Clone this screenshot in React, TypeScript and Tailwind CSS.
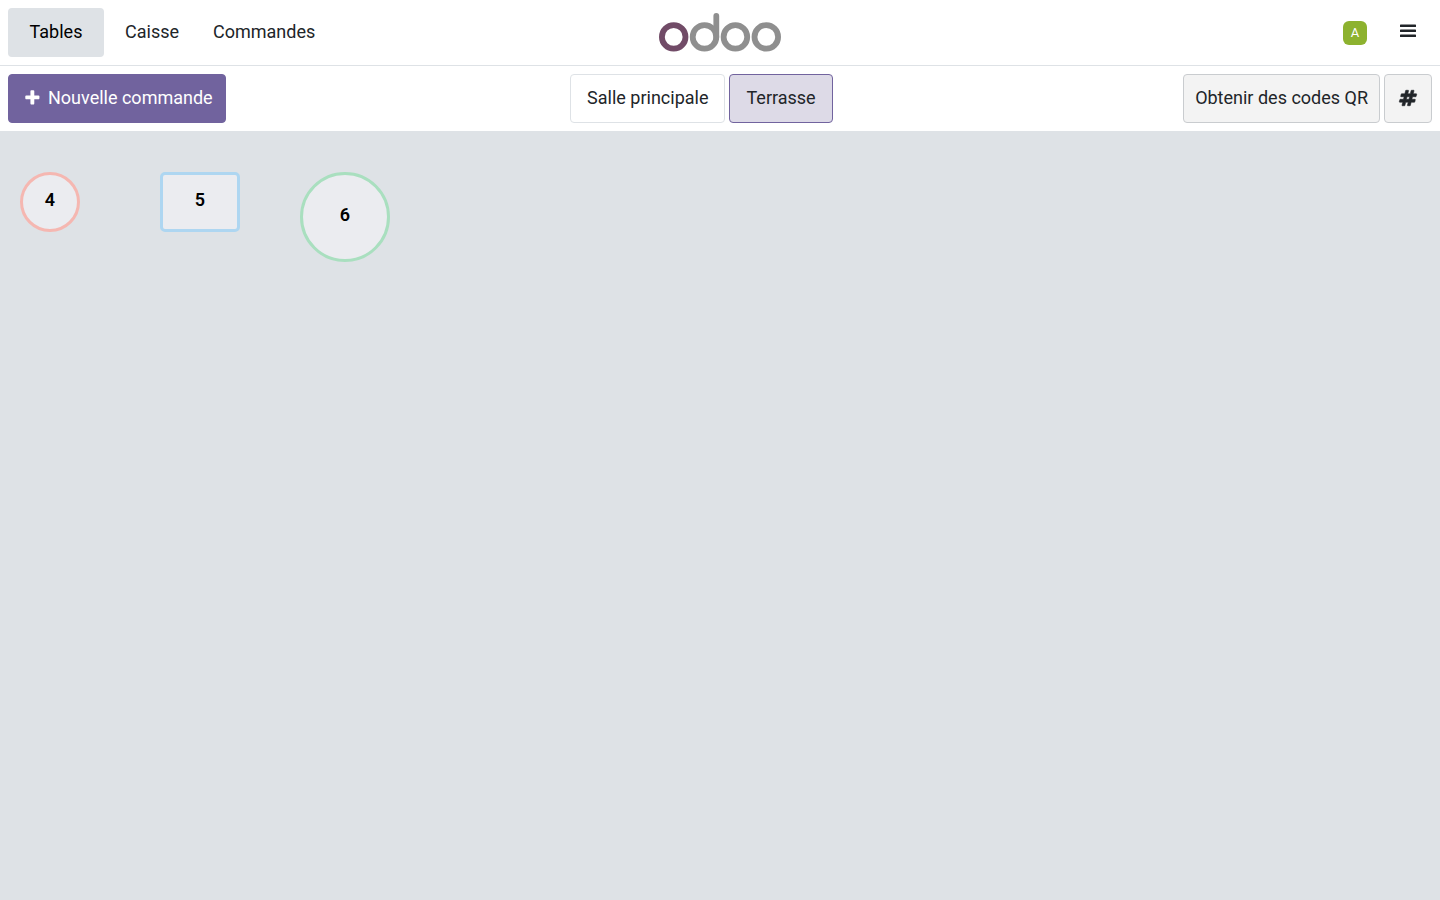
import { useState } from "react";
import clsx from "clsx";

const ICONS = {
  plus: {
    viewBox: "64 0 1792 1792",
    stroke: 0,
    path: "M1600 736v192q0 40-28 68t-68 28h-416v416q0 40-28 68t-68 28h-192q-40 0-68-28t-28-68v-416h-416q-40 0-68-28t-28-68v-192q0-40 28-68t68-28h416v-416q0-40 28-68t68-28h192q40 0 68 28t28 68v416h416q40 0 68 28t28 68z",
  },
  hashtag: {
    viewBox: "0 0 1792 1792",
    stroke: 60,
    path: "M991 1024l64-256h-254l-64 256h254zm768-504l-56 224q-7 24-31 24h-327l-64 256h311q15 0 25 12 10 14 6 28l-56 224q-5 24-31 24h-327l-81 328q-7 24-31 24h-224q-16 0-26-12-9-12-6-28l78-312h-254l-81 328q-7 24-31 24h-225q-15 0-25-12-9-12-6-28l78-312h-311q-15 0-25-12-9-12-6-28l56-224q7-24 31-24h327l64-256h-311q-15 0-25-12-10-14-6-28l56-224q5-24 31-24h327l81-328q7-24 32-24h224q15 0 25 12 9 12 6 28l-78 312h254l81-328q7-24 32-24h224q15 0 25 12 9 12 6 28l-78 312h311q15 0 25 12 9 12 6 28z",
  },
};

function Icon({ name }: { name: keyof typeof ICONS }) {
  const { viewBox, path, stroke } = ICONS[name];
  return (
    <svg viewBox={viewBox} className="size-[18px] shrink-0 overflow-visible" fill="currentColor" aria-hidden="true">
      <path d={path} stroke="currentColor" strokeWidth={stroke} />
    </svg>
  );
}

function Logo() {
  return (
    <svg viewBox="0 1 122 40" className="h-10 w-[122px]" fill="none" strokeWidth="5.8" role="img" aria-label="Odoo">
      <circle cx="14.7" cy="24.9" r="11.8" stroke="#714B67" />
      <g stroke="#8F8F8F">
        <circle cx="45.5" cy="24.9" r="11.8" />
        <circle cx="76.4" cy="24.9" r="11.8" />
        <circle cx="107.3" cy="24.9" r="11.8" />
        <path d="M57.3 24.9V4" strokeLinecap="round" />
      </g>
    </svg>
  );
}

const TABS = ["Tables", "Caisse", "Commandes"];
const FLOORS = ["Salle principale", "Terrasse"];
const TABLES = [
  { number: 4, shape: "left-5 top-[41px] h-[60px] w-[60px] rounded-full border-[#f5b7b1]" },
  { number: 5, shape: "left-40 top-[41px] h-[60px] w-20 rounded-[5px] border-[#aed6f1]" },
  { number: 6, shape: "left-[300px] top-[41px] h-[90px] w-[90px] rounded-full border-[#a9dfbf]" },
];

export default function App() {
  const [tab, setTab] = useState("Tables");
  const [floor, setFloor] = useState("Terrasse");

  return (
    <div className="flex min-h-screen flex-col bg-[#dee2e6] font-[Roboto,sans-serif] text-lg leading-[27px] text-[#212529]">
      <header className="flex items-center border-b border-[#dee2e6] bg-white p-2">
        <nav className="flex flex-1">
          {TABS.map((name) => (
            <button
              key={name}
              onClick={() => setTab(name)}
              className={clsx(
                "rounded px-[17px] pt-[10px] pb-3",
                name === "Tables" && "mr-1 min-w-24",
                tab === name && "bg-[#dee2e6] text-black",
              )}
            >
              {name}
            </button>
          ))}
        </nav>
        <Logo />
        <div className="flex flex-1 items-center justify-end">
          <span className="flex size-6 items-center justify-center rounded-md bg-[#8db22f] text-[13px] text-white">A</span>
          <button aria-label="Menu" className="ml-4 flex h-[49px] w-[49px] items-center justify-center pb-[3px]">
            <svg viewBox="0 0 16 14" className="h-3.5 w-4 fill-current" aria-hidden="true">
              <rect y="0.5" width="16" height="2.6" rx="0.6" />
              <rect y="5.5" width="16" height="2.6" rx="0.6" />
              <rect y="10.5" width="16" height="2.6" rx="0.6" />
            </svg>
          </button>
        </div>
      </header>

      <div className="flex items-center justify-between bg-white p-2">
        <button className="flex items-center gap-1.5 rounded border border-[#71639e] bg-[#71639e] pt-[9px] pr-3 pb-[11px] pl-[15px] text-white">
          <Icon name="plus" />
          Nouvelle commande
        </button>
        <div className="flex gap-1 pr-1.5">
          {FLOORS.map((name) => (
            <button
              key={name}
              onClick={() => setFloor(name)}
              className={clsx(
                "rounded border px-4 pt-[9px] pb-[11px]",
                floor === name ? "border-[#71639e] bg-[#dddae7]" : "border-[#dee2e6] bg-white",
              )}
            >
              {name}
            </button>
          ))}
        </div>
        <div className="flex gap-1">
          <button className="rounded border border-[#c9cccf] bg-[#f3f3f3] px-[11px] pt-[9px] pb-[11px]">Obtenir des codes QR</button>
          <button
            aria-label="Numéro de table"
            className="flex w-12 items-center justify-center rounded border border-[#c9cccf] bg-[#f3f3f3] pb-px"
          >
            <Icon name="hashtag" />
          </button>
        </div>
      </div>

      <main className="relative flex-1">
        {TABLES.map(({ number, shape }) => (
          <button
            key={number}
            className={clsx(
              "absolute flex items-center justify-center border-3 bg-[#ebecf0] pb-[5px] font-semibold text-black",
              shape,
            )}
          >
            {number}
          </button>
        ))}
      </main>
    </div>
  );
}
